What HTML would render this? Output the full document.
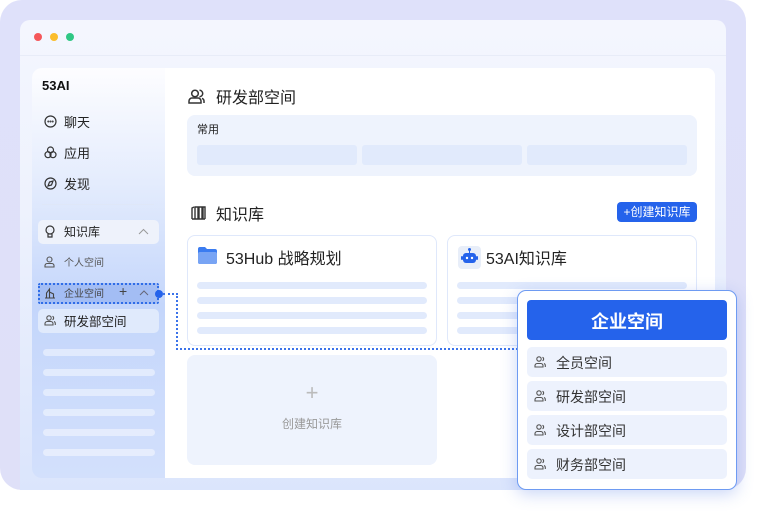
<!DOCTYPE html><html><head><meta charset="utf-8"><style>
*{margin:0;padding:0;box-sizing:border-box}
body{width:758px;height:513px;background:#fff;font-family:"Liberation Sans","Noto Sans CJK SC",sans-serif;position:relative;overflow:hidden;color:#222}
.a{position:absolute}
.bar{position:absolute;border-radius:4px;background:#e1eafc}
.sb{position:absolute;left:43px;width:112px;height:7px;border-radius:4px;background:rgba(255,255,255,.45)}
.pi{position:absolute;left:527px;width:200px;height:30px;background:#edf2fd;border-radius:5px;font-size:14px;color:#333;line-height:32px;padding-left:29px}
.pi svg{position:absolute;left:7px;top:9px}
</style></head><body>
<div class="a" style="left:0;top:0;width:746px;height:490px;border-radius:22px;background:linear-gradient(180deg,#dfe1fa,#dfe0f8)"></div>
<div class="a" style="left:20px;top:20px;width:706px;height:470px;border-radius:10px 10px 0 0;background:linear-gradient(180deg,#f4f6fe 0,#eef2fd 40%,#dbe5fc 100%)"></div>
<div class="a" style="left:20px;top:55px;width:706px;height:1px;background:#e8ecf8"></div>
<div class="a" style="left:34px;top:33px;width:8px;height:8px;border-radius:50%;background:#f5575a"></div>
<div class="a" style="left:50px;top:33px;width:8px;height:8px;border-radius:50%;background:#fbbd2c"></div>
<div class="a" style="left:66px;top:33px;width:8px;height:8px;border-radius:50%;background:#2fc784"></div>
<div class="a" style="left:32px;top:68px;width:140px;height:410px;border-radius:10px 0 0 10px;background:linear-gradient(180deg,#fdfdff 0,#e4ecfd 28%,#c4d6fb 58%,#d3e0fc 100%)"></div>
<div class="a" style="left:42px;top:78px;font-size:13px;font-weight:bold;color:#111">53AI</div>
<svg class="a" style="left:44px;top:115px" width="13" height="13" viewBox="0 0 13 13" fill="none" stroke="#333" stroke-width="1.2"><circle cx="6.5" cy="6.5" r="5.5"/><circle cx="4.3" cy="6.5" r=".4"/><circle cx="6.5" cy="6.5" r=".4"/><circle cx="8.7" cy="6.5" r=".4"/></svg>
<div class="a" style="left:64px;top:112px;font-size:13px">聊天</div>
<svg class="a" style="left:44px;top:146px" width="13" height="13" viewBox="0 0 13 13" fill="none" stroke="#333" stroke-width="1.2"><circle cx="6.5" cy="4" r="3"/><circle cx="4" cy="8.7" r="3"/><circle cx="9" cy="8.7" r="3"/></svg>
<div class="a" style="left:64px;top:143px;font-size:13px">应用</div>
<svg class="a" style="left:44px;top:177px" width="13" height="13" viewBox="0 0 13 13" fill="none" stroke="#333" stroke-width="1.2"><circle cx="6.5" cy="6.5" r="5.5"/><path d="M4 9l1.5-4L9 4 7.5 8z"/></svg>
<div class="a" style="left:64px;top:174px;font-size:13px">发现</div>
<div class="a" style="left:42px;top:204px;width:112px;height:1px;background:#dfe7f8"></div>
<div class="a" style="left:38px;top:220px;width:121px;height:24px;border-radius:5px;background:#eef2fb"></div>
<svg class="a" style="left:44px;top:225px" width="12" height="13" viewBox="0 0 12 13" fill="none" stroke="#333" stroke-width="1.2"><circle cx="6" cy="5" r="4"/><path d="M4 9v3h4V9M4.5 5h.1M7.5 5h.1"/></svg>
<div class="a" style="left:64px;top:223px;font-size:12px">知识库</div>
<svg class="a" style="left:138px;top:228px" width="11" height="7" viewBox="0 0 11 7" fill="none" stroke="#999" stroke-width="1"><path d="M1 6l4.5-4.5L10 6"/></svg>
<svg class="a" style="left:44px;top:256px" width="11" height="12" viewBox="0 0 11 12" fill="none" stroke="#555" stroke-width="1.1"><circle cx="5.5" cy="3.5" r="2.5"/><path d="M1 11V9.5c0-1 1-2 2-2h5c1 0 2 1 2 2V11z"/></svg>
<div class="a" style="left:64px;top:254px;font-size:10px;color:#555">个人空间</div>
<div class="a" style="left:38px;top:283px;width:121px;height:21px;background:#a3bdf4;border:2px dotted #2f6de8;border-radius:2px"></div>
<svg class="a" style="left:44px;top:287px" width="12" height="12" viewBox="0 0 12 12" fill="none" stroke="#444" stroke-width="1.1"><path d="M1 11h10M2.5 11V6l3-4v9M5.5 5l4 2v4"/></svg>
<div class="a" style="left:64px;top:285px;font-size:10px;color:#444">企业空间</div>
<div class="a" style="left:119px;top:283px;font-size:14px;color:#444">+</div>
<svg class="a" style="left:139px;top:290px" width="10" height="6" viewBox="0 0 10 6" fill="none" stroke="#667" stroke-width="1"><path d="M1 5l4-4 4 4"/></svg>
<div class="a" style="left:155px;top:290px;width:8px;height:8px;border-radius:50%;background:#2563eb"></div>
<div class="a" style="left:38px;top:309px;width:121px;height:24px;border-radius:5px;background:#e0eafc"></div>
<svg class="a" style="left:44px;top:315px" width="12" height="11" viewBox="0 0 12 11" fill="none" stroke="#555" stroke-width="1.1"><circle cx="5" cy="3" r="2.2"/><path d="M1 10V8.5c0-1 1-2 2-2h4c1 0 2 1 2 2V10zM8.5 1.2a2 2 0 010 3.6M10 6.5c.8.3 1.3 1 1.3 2V10"/></svg>
<div class="a" style="left:64px;top:311px;font-size:12.5px">研发部空间</div>
<div class="sb" style="top:349px"></div><div class="sb" style="top:369px"></div><div class="sb" style="top:389px"></div><div class="sb" style="top:409px"></div><div class="sb" style="top:429px"></div><div class="sb" style="top:449px"></div>
<div class="a" style="left:165px;top:68px;width:550px;height:410px;background:#fff;border-radius:0 8px 8px 0"></div>
<svg class="a" style="left:188px;top:89px" width="17" height="15" viewBox="0 0 17 15" fill="none" stroke="#333" stroke-width="1.5"><circle cx="7" cy="4.5" r="3.3"/><path d="M1 14v-2c0-1.5 1.3-3 3-3h6c1.7 0 3 1.5 3 3v2zM11.5 1.3a3 3 0 010 6.4M14 9.3c1.2.5 2 1.5 2 2.8V14"/></svg>
<div class="a" style="left:216px;top:84px;font-size:16px">研发部空间</div>
<div class="a" style="left:187px;top:115px;width:510px;height:61px;border-radius:8px;background:#eef3fd"></div>
<div class="a" style="left:197px;top:121px;font-size:11px">常用</div>
<div class="bar" style="left:197px;top:145px;width:160px;height:20px;border-radius:3px"></div>
<div class="bar" style="left:362px;top:145px;width:160px;height:20px;border-radius:3px"></div>
<div class="bar" style="left:527px;top:145px;width:160px;height:20px;border-radius:3px"></div>
<svg class="a" style="left:191px;top:206px" width="15" height="14" viewBox="0 0 15 14" fill="none" stroke="#333" stroke-width="1.4"><path d="M1 13V2l2-1M4 13V1h3v12M8 13V1h3v12M12 13V1h2v12M1 13h13"/></svg>
<div class="a" style="left:216px;top:201px;font-size:16px">知识库</div>
<div class="a" style="left:617px;top:202px;width:80px;height:20px;border-radius:4px;background:#2563eb;color:#fff;font-size:12px;line-height:20px;text-align:center">+创建知识库</div>
<div class="a" style="left:187px;top:235px;width:250px;height:111px;border-radius:8px;border:1.5px solid #dfe8fb"></div>
<div class="a" style="left:447px;top:235px;width:250px;height:111px;border-radius:8px;border:1.5px solid #dfe8fb"></div>
<svg class="a" style="left:198px;top:247px" width="19" height="17" viewBox="0 0 19 17"><path d="M0 2a2 2 0 012-2h5l2 2h8a2 2 0 012 2v11a2 2 0 01-2 2H2a2 2 0 01-2-2z" fill="#3b7cf0"/><rect x="0" y="5" width="19" height="12" rx="2" fill="#78a4f4"/></svg>
<div class="a" style="left:226px;top:245px;font-size:16px">53Hub 战略规划</div>
<div class="a" style="left:458px;top:246px;width:23px;height:23px;border-radius:4px;background:#e8eef9"></div>
<svg class="a" style="left:460px;top:247px" width="19" height="20" viewBox="0 0 19 20"><circle cx="9.5" cy="2.5" r="1.5" fill="#2563eb"/><rect x="9" y="3" width="1" height="3" fill="#2563eb"/><rect x="3" y="6" width="13" height="10" rx="3" fill="#2563eb"/><rect x="1" y="9" width="2" height="4" rx="1" fill="#2563eb"/><rect x="16" y="9" width="2" height="4" rx="1" fill="#2563eb"/><circle cx="7" cy="11" r="1.2" fill="#fff"/><circle cx="12" cy="11" r="1.2" fill="#fff"/></svg>
<div class="a" style="left:486px;top:245px;font-size:16px">53AI知识库</div>
<div class="bar" style="left:197px;top:282px;width:230px;height:7px"></div><div class="bar" style="left:197px;top:297px;width:230px;height:7px"></div><div class="bar" style="left:197px;top:312px;width:230px;height:7px"></div><div class="bar" style="left:197px;top:327px;width:230px;height:7px"></div>
<div class="bar" style="left:457px;top:282px;width:230px;height:7px"></div><div class="bar" style="left:457px;top:297px;width:230px;height:7px"></div><div class="bar" style="left:457px;top:312px;width:230px;height:7px"></div><div class="bar" style="left:457px;top:327px;width:230px;height:7px"></div>
<div class="a" style="left:187px;top:355px;width:250px;height:110px;border-radius:8px;background:#eef3fd"></div>
<div class="a" style="left:187px;top:380px;width:250px;text-align:center;font-size:22px;color:#bbb;font-weight:300">+</div>
<div class="a" style="left:187px;top:415px;width:250px;text-align:center;font-size:12px;color:#999">创建知识库</div>
<div class="a" style="left:163px;top:293px;width:15px;border-top:2px dotted #3b73ea"></div>
<div class="a" style="left:176px;top:293px;height:57px;border-left:2px dotted #3b73ea"></div>
<div class="a" style="left:176px;top:348px;width:342px;border-top:2px dotted #3b73ea"></div>
<div class="a" style="left:517px;top:290px;width:220px;height:200px;border-radius:9px;background:#fff;border:1.5px solid #6e9bf2;box-shadow:0 4px 16px rgba(80,120,230,.3)"></div>
<div class="a" style="left:527px;top:300px;width:200px;height:40px;border-radius:4px;background:#2563eb;color:#fff;font-size:18px;font-weight:bold;line-height:44px;text-align:center">企业空间</div>
<div class="pi" style="top:347px"><svg width="13" height="12" viewBox="0 0 13 12" fill="none" stroke="#555" stroke-width="1.1"><circle cx="5" cy="3" r="2.2"/><path d="M1 11V9.5c0-1 1-2 2-2h4c1 0 2 1 2 2V11zM8.5 1.2a2 2 0 010 3.6M10 7.5c.8.3 1.3 1 1.3 2V11"/></svg>全员空间</div>
<div class="pi" style="top:381px"><svg width="13" height="12" viewBox="0 0 13 12" fill="none" stroke="#555" stroke-width="1.1"><circle cx="5" cy="3" r="2.2"/><path d="M1 11V9.5c0-1 1-2 2-2h4c1 0 2 1 2 2V11zM8.5 1.2a2 2 0 010 3.6M10 7.5c.8.3 1.3 1 1.3 2V11"/></svg>研发部空间</div>
<div class="pi" style="top:415px"><svg width="13" height="12" viewBox="0 0 13 12" fill="none" stroke="#555" stroke-width="1.1"><circle cx="5" cy="3" r="2.2"/><path d="M1 11V9.5c0-1 1-2 2-2h4c1 0 2 1 2 2V11zM8.5 1.2a2 2 0 010 3.6M10 7.5c.8.3 1.3 1 1.3 2V11"/></svg>设计部空间</div>
<div class="pi" style="top:449px"><svg width="13" height="12" viewBox="0 0 13 12" fill="none" stroke="#555" stroke-width="1.1"><circle cx="5" cy="3" r="2.2"/><path d="M1 11V9.5c0-1 1-2 2-2h4c1 0 2 1 2 2V11zM8.5 1.2a2 2 0 010 3.6M10 7.5c.8.3 1.3 1 1.3 2V11"/></svg>财务部空间</div>
</body></html>
